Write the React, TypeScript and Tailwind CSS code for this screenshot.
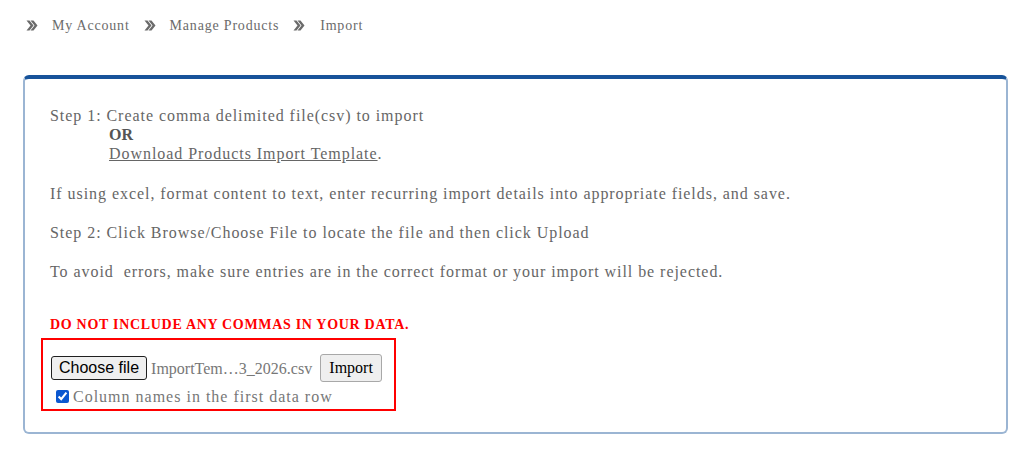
import React from "react";

function Chevrons() {
  return (
    <svg width="12" height="11" viewBox="0 0 12 11" className="shrink-0">
      <path d="M0.5 0.5 L3.5 0.5 L7.5 5.5 L3.5 10.5 L0.5 10.5 L4.5 5.5 Z" fill="#6b6b6b" />
      <path d="M4.5 0.5 L7.5 0.5 L11.5 5.5 L7.5 10.5 L4.5 10.5 L8.5 5.5 Z" fill="#6b6b6b" />
    </svg>
  );
}

export default function App() {
  const serif = { fontFamily: '"Liberation Serif", "Times New Roman", serif' };
  return (
    <div className="w-[1024px] h-[456px] bg-white" style={serif}>
      <div className="flex items-center h-[51px] pl-[26px] text-[14px] tracking-[0.8px] text-[#6b6b6b]">
        <Chevrons />
        <span className="ml-[14px]">My Account</span>
        <span className="ml-[14px]"><Chevrons /></span>
        <span className="ml-[14px]">Manage Products</span>
        <span className="ml-[14px]"><Chevrons /></span>
        <span className="ml-[15px]">Import</span>
      </div>
      <div className="mt-[24px] ml-[23px] w-[985px] h-[359px] border-2 border-t-4 border-[#9bb5d3] border-t-[#17539a] rounded-[6px] pt-[27px] pl-[16px] text-[16px] text-[#666] leading-[19px]">
        <div className="pl-[9px] tracking-[0.95px]">
          <div>Step 1: Create comma delimited file(csv) to import</div>
          <div className="pl-[59px] font-bold text-[#555] tracking-normal">OR</div>
          <div className="pl-[59px]">
            <span className="underline">Download Products Import Template</span>.
          </div>
          <div className="mt-[21px]">
            If using excel, format content to text, enter recurring import details into appropriate fields, and save.
          </div>
          <div className="mt-[20px]">Step 2: Click Browse/Choose File to locate the file and then click Upload</div>
          <div className="mt-[20px]">To avoid&nbsp; errors, make sure entries are in the correct format or your import will be rejected.</div>
          <div className="mt-[36px] text-[14px] font-bold text-[#ff0000] leading-[16px] tracking-[0.7px]">
            DO NOT INCLUDE ANY COMMAS IN YOUR DATA.
          </div>
        </div>
        <div className="mt-[5px] w-[355px] h-[73px] border-2 border-[#ff0000] pl-[8px] pt-[14px]">
          <div className="flex items-center">
            <button
              className="h-[24px] px-[7px] bg-[#efefef] border border-[#1f1f1f] rounded-[3px] text-[16px] text-black leading-none"
              style={{ fontFamily: '"Liberation Sans", Arial, sans-serif' }}
            >
              Choose file
            </button>
            <span className="ml-[4px] text-[16px] text-[#777]">ImportTem…3_2026.csv</span>
            <button className="ml-[8px] h-[28px] w-[62px] bg-[#efefef] border border-[#a8a8a8] rounded-[3px] text-[16px] text-black leading-none">
              Import
            </button>
          </div>
          <div className="flex items-center mt-[5px] ml-[5px]">
            <input type="checkbox" defaultChecked className="w-[13px] h-[13px] m-0 accent-[#0b57d0]" />
            <span className="ml-[4px] text-[16px] text-[#777] tracking-[1px]">Column names in the first data row</span>
          </div>
        </div>
      </div>
    </div>
  );
}
